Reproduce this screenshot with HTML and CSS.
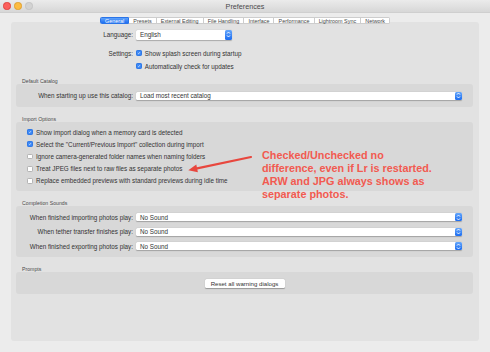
FILE: index.html
```html
<!DOCTYPE html>
<html lang="en">
<head>
    <meta charset="UTF-8">
    <title>Preferences</title>
    <link rel="stylesheet" href="styles.css">
</head>
<body>
    <div class="titlebar">
        <div class="lights">
            <span class="light red"></span>
            <span class="light yellow"></span>
            <span class="light off"></span>
        </div>
        <div class="title">Preferences</div>
    </div>

    <div class="tabs">
        <span class="tab active">General</span>
        <span class="tab">Presets</span>
        <span class="tab">External Editing</span>
        <span class="tab">File Handling</span>
        <span class="tab">Interface</span>
        <span class="tab">Performance</span>
        <span class="tab">Lightroom Sync</span>
        <span class="tab">Network</span>
    </div>

    <div class="panel">
        <div class="top">
            <div class="row lang-row">
                <span class="label">Language:</span>
                <div class="select short">
                    <span>English</span>
                    <span class="stepper"><svg width="7" height="9" viewBox="0 0 7 9"><path d="M2 3.6 L3.5 2 L5 3.6 M2 5.4 L3.5 7 L5 5.4" fill="none" stroke="#fff" stroke-width="0.9"/></svg></span>
                </div>
            </div>
            <div class="row check-row first">
                <span class="label">Settings:</span>
                <span class="box on"><svg width="6" height="6" viewBox="0 0 6 6"><path d="M1.3 3.1 L2.5 4.3 L4.7 1.6" fill="none" stroke="#fff" stroke-width="1"/></svg></span>
                <span class="text">Show splash screen during startup</span>
            </div>
            <div class="row check-row">
                <span class="label"></span>
                <span class="box on"><svg width="6" height="6" viewBox="0 0 6 6"><path d="M1.3 3.1 L2.5 4.3 L4.7 1.6" fill="none" stroke="#fff" stroke-width="1"/></svg></span>
                <span class="text">Automatically check for updates</span>
            </div>
        </div>

        <div class="group-title first-title">Default Catalog</div>
        <div class="group catalog">
            <div class="row select-row">
                <span class="label">When starting up use this catalog:</span>
                <div class="select">
                    <span>Load most recent catalog</span>
                    <span class="stepper"><svg width="7" height="9" viewBox="0 0 7 9"><path d="M2 3.6 L3.5 2 L5 3.6 M2 5.4 L3.5 7 L5 5.4" fill="none" stroke="#fff" stroke-width="0.9"/></svg></span>
                </div>
            </div>
        </div>

        <div class="group-title">Import Options</div>
        <div class="group import">
            <div class="row opt-row">
                <span class="box on"><svg width="6" height="6" viewBox="0 0 6 6"><path d="M1.3 3.1 L2.5 4.3 L4.7 1.6" fill="none" stroke="#fff" stroke-width="1"/></svg></span>
                <span class="text">Show import dialog when a memory card is detected</span>
            </div>
            <div class="row opt-row">
                <span class="box on"><svg width="6" height="6" viewBox="0 0 6 6"><path d="M1.3 3.1 L2.5 4.3 L4.7 1.6" fill="none" stroke="#fff" stroke-width="1"/></svg></span>
                <span class="text">Select the "Current/Previous Import" collection during import</span>
            </div>
            <div class="row opt-row">
                <span class="box"></span>
                <span class="text">Ignore camera-generated folder names when naming folders</span>
            </div>
            <div class="row opt-row">
                <span class="box"></span>
                <span class="text">Treat JPEG files next to raw files as separate photos</span>
            </div>
            <div class="row opt-row">
                <span class="box"></span>
                <span class="text">Replace embedded previews with standard previews during idle time</span>
            </div>
        </div>

        <div class="group-title">Completion Sounds</div>
        <div class="group sounds">
            <div class="row sound-row">
                <span class="label">When finished importing photos play:</span>
                <div class="select">
                    <span>No Sound</span>
                    <span class="stepper"><svg width="7" height="9" viewBox="0 0 7 9"><path d="M2 3.6 L3.5 2 L5 3.6 M2 5.4 L3.5 7 L5 5.4" fill="none" stroke="#fff" stroke-width="0.9"/></svg></span>
                </div>
            </div>
            <div class="row sound-row">
                <span class="label">When tether transfer finishes play:</span>
                <div class="select">
                    <span>No Sound</span>
                    <span class="stepper"><svg width="7" height="9" viewBox="0 0 7 9"><path d="M2 3.6 L3.5 2 L5 3.6 M2 5.4 L3.5 7 L5 5.4" fill="none" stroke="#fff" stroke-width="0.9"/></svg></span>
                </div>
            </div>
            <div class="row sound-row">
                <span class="label">When finished exporting photos play:</span>
                <div class="select">
                    <span>No Sound</span>
                    <span class="stepper"><svg width="7" height="9" viewBox="0 0 7 9"><path d="M2 3.6 L3.5 2 L5 3.6 M2 5.4 L3.5 7 L5 5.4" fill="none" stroke="#fff" stroke-width="0.9"/></svg></span>
                </div>
            </div>
        </div>

        <div class="group-title">Prompts</div>
        <div class="group prompts">
            <button class="btn">Reset all warning dialogs</button>
        </div>
    </div>

    <!-- annotation drawn over the screenshot -->
    <svg class="arrow" width="80" height="28" viewBox="0 0 80 28">
        <path d="M71 7 L17.1 18.4" stroke="#e8473e" stroke-width="2.2" stroke-linecap="round"/>
        <path d="M8.3 20.3 L17.9 22.3 L16.3 14.5 Z" fill="#e8473e"/>
    </svg>
    <div class="note">Checked/Unchecked no<br>difference, even if Lr is restarted.<br>ARW and JPG always shows as<br>separate photos.</div>
</body>
</html>
```

FILE: styles.css
```css
* {
    margin: 0;
    padding: 0;
    box-sizing: border-box;
}

body {
    width: 490px;
    height: 352px;
    overflow: hidden;
    background-color: #ececec;
    font-family: 'Liberation Sans', Arial, sans-serif;
    color: #333;
}

/* title bar */
.titlebar {
    height: 13px;
    display: flex;
    align-items: center;
    padding-right: 36px;
    background: linear-gradient(#ebebeb, #d7d7d7);
    border-bottom: 1px solid #cfcfcf;
}

.lights {
    width: 36px;
    display: flex;
    gap: 3.8px;
    padding-left: 3.4px;
}

.light {
    width: 7.2px;
    height: 7.2px;
    border-radius: 50%;
}

.light.red { background-color: #fc605c; border: 0.5px solid #e0443f; }
.light.yellow { background-color: #fdbc40; border: 0.5px solid #dea033; }
.light.off { background-color: #d3d3d3; border: 0.5px solid #c4c4c4; }

.title {
    flex: 1;
    text-align: center;
    font-size: 7.2px;
    color: #4a4a4a;
}

/* tabs */
.tabs {
    display: flex;
    justify-content: center;
    margin-top: 4px;
    position: relative;
    z-index: 1;
}

.tab {
    height: 7px;
    line-height: 6px;
    padding: 0 4.1px;
    font-size: 5.4px;
    color: #444;
    background-color: #fff;
    border: 0.5px solid #cdcdcd;
    border-left: none;
}

.tab:first-child {
    border-left: 0.5px solid #cdcdcd;
    border-radius: 1.5px 0 0 1.5px;
}

.tab:last-child {
    border-radius: 0 1.5px 1.5px 0;
}

.tab.active {
    color: #fff;
    background: linear-gradient(#5ea2fb, #1f6ff2);
    border-color: #2a74e8;
}

/* main panel */
.panel {
    margin: -2px 11px 0;
    height: 319px;
    padding-top: 8.3px;
    background-color: #e2e2e2;
    border-radius: 3px;
}

.row {
    display: flex;
    align-items: center;
    font-size: 6.3px;
}

.label {
    flex: none;
    text-align: right;
    padding-right: 3px;
    white-space: nowrap;
}

.top .label {
    width: 125px;
}

.lang-row {
    height: 9.4px;
}

.check-row {
    height: 8px;
    margin-top: 5px;
}

.check-row.first {
    margin-top: 9.6px;
}

.box {
    flex: none;
    width: 5.8px;
    height: 5.8px;
    margin-right: 3px;
    border-radius: 1.2px;
    background-color: #fff;
    border: 0.5px solid #b4b4b4;
    display: flex;
    align-items: center;
    justify-content: center;
}

.box.on {
    background-color: #3a87f6;
    border-color: #2f78e6;
}

.box svg {
    display: block;
}

.text {
    white-space: nowrap;
}

/* dropdowns */
.select {
    flex: 1;
    height: 8.6px;
    display: flex;
    align-items: center;
    justify-content: space-between;
    padding-left: 4px;
    background-color: #fff;
    border-radius: 1.5px;
    box-shadow: 0 0.5px 1px rgba(0, 0, 0, 0.25);
    color: #333;
}

.select.short {
    flex: none;
    width: 96px;
    height: 9.4px;
}

.stepper {
    width: 7px;
    height: 100%;
    margin-right: 0.5px;
    border-radius: 1.5px;
    background: linear-gradient(#64a6fb, #1c6cf0);
    display: flex;
    align-items: center;
    justify-content: center;
}

.stepper svg {
    display: block;
}

/* groups */
.group-title {
    height: 6px;
    line-height: 6px;
    margin-top: 9.5px;
    padding-left: 11px;
    font-size: 5.2px;
    color: #4a4a4a;
}

.group-title.first-title {
    margin-top: 8px;
}

.group {
    margin: 0 6px 0 5px;
    background-color: #d8d8d8;
    border-radius: 3px;
}

.group .label {
    width: 120px;
}

.catalog {
    height: 22.4px;
    padding: 7.4px 11px 0 0;
}

.import {
    height: 68.4px;
    padding: 3.9px 0 0 11.3px;
}

.opt-row {
    height: 12.2px;
}

.sounds {
    height: 50.7px;
    padding: 4.1px 11px 0 0;
}

.sound-row {
    height: 14.4px;
}

.sound-row .select {
    height: 8.2px;
}

.prompts {
    height: 21.4px;
    display: flex;
    align-items: center;
    justify-content: center;
    padding-top: 0.8px;
}

.btn {
    width: 80px;
    height: 8.4px;
    font-family: inherit;
    font-size: 6.1px;
    color: #333;
    background-color: #fff;
    border: none;
    border-radius: 1.5px;
    box-shadow: 0 0.5px 1px rgba(0, 0, 0, 0.3);
}

/* red annotation */
.arrow {
    position: absolute;
    left: 180px;
    top: 150px;
}

.note {
    position: absolute;
    left: 262px;
    top: 149.3px;
    font-size: 10.8px;
    font-weight: bold;
    line-height: 12.8px;
    color: #f25a50;
    white-space: nowrap;
}
```
